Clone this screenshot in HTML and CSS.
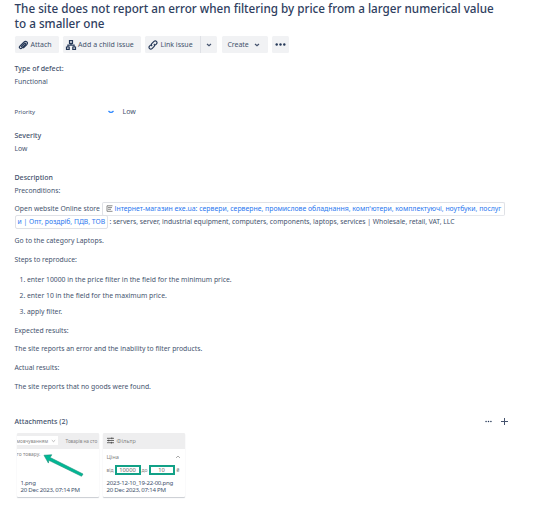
FILE: index.html
```
<!DOCTYPE html>
<html lang="en">
<head>
<meta charset="utf-8">
<title>Issue</title>
<link rel="stylesheet" href="styles.css">
</head>
<body>
<main class="issue">
  <h1 class="title">The site does not report an error when filtering by price from a larger numerical value<br>to a smaller one</h1>
  <div class="toolbar">
    <button class="btn attach"><svg class="icon" viewBox="0 0 12 12"><path d="M4 7.900 7.500 4.400c.8-.8 1.700.2 1 1L4.900 9c-1.500 1.500-3.400-.4-2-1.900l4-4c2.200-2.200 4.800.5 2.700 2.700L6.200 9.200"/></svg><span>Attach</span></button>
    <button class="btn child"><svg class="icon" viewBox="0 0 12 12"><path d="M4.500 1.700h3v2.600h-3zM1.500 8h2.700v2.300H1.500zM7.800 8h2.700v2.300H7.800zM6 4.300v1.900M2.900 8V6.200h6.200V8"/></svg><span>Add a child issue</span></button>
    <div class="split">
      <button class="btn link"><svg class="icon" viewBox="0 0 12 12"><path d="M5.200 7.100C4 6 4.200 5.200 5 4.400L7 2.400c1.600-1.600 4.100.8 2.500 2.400L8.200 6.200M6.800 4.900C8 6 7.800 6.800 7 7.600L5 9.600C3.400 11.200.9 8.800 2.500 7.200L3.800 5.800"/></svg><span>Link issue</span></button>
      <button class="btn drop"><svg class="chev" viewBox="0 0 6 4"><path d="M1 1l2 1.800L5 1"/></svg></button>
    </div>
    <button class="btn create"><span>Create</span><svg class="chev" viewBox="0 0 6 4"><path d="M1 1l2 1.800L5 1"/></svg></button>
    <button class="btn more"><svg class="dots" viewBox="0 0 11 3"><circle cx="1.700" cy="1.500" r="1.200"/><circle cx="5.500" cy="1.500" r="1.200"/><circle cx="9.300" cy="1.500" r="1.200"/></svg></button>
  </div>
  <section class="field defect"><h2>Type of defect:</h2><p>Functional</p></section>
  <section class="priority"><span class="name">Priority</span><svg class="chev" viewBox="0 0 6 4"><path d="M.5 1Q3 3.800 5.500 1"/></svg><span>Low</span></section>
  <section class="field severity"><h2>Severity</h2><p>Low</p></section>
  <section class="description">
    <h2>Description</h2>
    <p class="pre">Preconditions:</p>
    <div class="site">
      <div class="line"><span class="open">Open website Online store</span><a class="card first"><svg class="page" viewBox="0 0 7 7"><path d="M6.500.8H1v5.500h5.500M2 2.600h4M2 4.300h3"/></svg><span>Інтернет-магазин exe.ua: сервери, серверне, промислове обладнання, комп'ютери, комплектуючі, ноутбуки, послуг</span></a></div>
      <div class="line"><a class="card second"><span>и | Опт, роздріб, ПДВ, ТОВ</span></a><span class="rest">: servers, server, industrial equipment, computers, components, laptops, services | Wholesale, retail, VAT, LLC</span></div>
    </div>
    <p class="goto">Go to the category Laptops.</p>
    <p class="steps-title">Steps to reproduce:</p>
    <ol class="steps">
      <li><span>1.</span>enter 10000 in the price filter in the field for the minimum price.</li>
      <li><span>2.</span>enter 10 in the field for the maximum price.</li>
      <li><span>3.</span>apply filter.</li>
    </ol>
    <div class="results">
      <p>Expected results:</p>
      <p>The site reports an error and the inability to filter products.</p>
      <p>Actual results:</p>
      <p>The site reports that no goods were found.</p>
    </div>
  </section>
  <section class="attachments">
    <header><h2>Attachments (2)</h2><div class="actions"><svg class="dots" viewBox="0 0 11 3"><circle cx="1.700" cy="1.500" r="1.200"/><circle cx="5.500" cy="1.500" r="1.200"/><circle cx="9.300" cy="1.500" r="1.200"/></svg><svg class="plus" viewBox="0 0 7 7"><path d="M3.500 0v7M0 3.500h7"/></svg></div></header>
    <div class="files">
      <article class="file one">
        <div class="shot">
          <div class="bar"><span class="select">мовчуванням<svg class="chev" viewBox="0 0 6 4"><path d="M1 1l2 1.800L5 1"/></svg></span><span class="count">Товарів на сто</span></div>
          <div class="goods">го товару.</div>
          <svg class="arrow" viewBox="0 0 42 24"><path d="M1 1 9 .5 7.300 3.300 41 20.200 39.500 22.500 6 6.200 5.500 9z"/></svg>
        </div>
        <div class="meta">1.png<br>20 Dec 2023, 07:14 PM</div>
      </article>
      <article class="file two">
        <div class="shot">
          <div class="bar"><svg class="sliders" viewBox="0 0 8 8"><path d="M0 1.500h8M0 4h8M0 6.500h8M5.500.5v2M2 3v2M5 5.500v2"/></svg><span>Фільтр</span></div>
          <div class="price"><span>Ціна</span><svg class="chev" viewBox="0 0 6 4"><path d="M1 3l2-2 2 2"/></svg></div>
          <div class="range"><span class="from">від</span><span class="box">10000</span><span class="to">до</span><span class="box">10</span><span class="cur">₴</span></div>
        </div>
        <div class="meta"><span class="fname">2023-12-10_19-22-00.png</span><br>20 Dec 2023, 07:14 PM</div>
      </article>
    </div>
  </section>
</main>
</body>
</html>
```
FILE: styles.css
```
* { box-sizing: border-box; }
body { margin: 0; background: #fff; color: #44526d; font: 7px/10px "Noto Sans", "Open Sans", sans-serif; }
h1, h2, p, ol { margin: 0; padding: 0; }
h2 { font-size: 7px; line-height: 10px; font-weight: 500; color: #42506b; }
svg { display: block; flex: none; fill: none; stroke: currentColor; }
span, p { white-space: nowrap; }
.issue { width: 539px; height: 508px; padding: 1px 0 0 14.5px; overflow: hidden; }
.title { font-size: 11.7px; line-height: 15px; font-weight: 500; color: #2f4060; white-space: nowrap; }
.toolbar { display: flex; height: 17px; margin-top: 5px; }
.btn { display: flex; align-items: center; height: 17px; border: 0; padding: 0; border-radius: 1.5px; background: #f1f2f4; color: #44526d; font: inherit; }
.icon { width: 12px; height: 12px; margin: 0 1px 0 2px; stroke-width: 1.2; color: #253858; }
.chev { width: 6px; height: 4px; stroke-width: 1.2; }
.dots { width: 11px; height: 3px; fill: currentColor; stroke: none; color: #253858; }
.attach { width: 44px; margin-right: 4.5px; }
.attach .icon { margin-right: 2px; }
.child { width: 77.5px; margin-right: 4.5px; letter-spacing: .06px; }
.split { display: flex; width: 72px; margin-right: 5px; }
.link { width: 55px; border-radius: 1.5px 0 0 1.5px; }
.link .icon { margin-right: 1.5px; }
.drop { flex: 1; justify-content: center; border-left: 1px solid #dfe1e6; border-radius: 0 1.5px 1.5px 0; }
.create { width: 46px; padding-left: 5.5px; gap: 5px; margin-right: 4px; }
.create span { letter-spacing: -.05px; }
.more { width: 17px; justify-content: center; }
.defect { margin-top: 10.5px; }
.field p { margin-top: 3px; font-size: 6.8px; }
.priority { display: flex; align-items: center; height: 10px; margin-top: 20.5px; }
.priority .name { width: 93.5px; font-size: 6px; }
.priority .chev { color: #2684ff; margin-right: 8.5px; }
.severity { margin-top: 14px; }
.description { margin-top: 19px; font-size: 6.8px; }
.pre { margin-top: 3px; }
.site { margin-top: 6px; }
.line { display: flex; align-items: center; height: 13px; }
.open { width: 87.5px; letter-spacing: .02px; }
.card { display: flex; align-items: center; height: 14px; border: 1px solid #dfe1e6; border-radius: 2px; color: #2a78f0; font-size: 6.88px; }
.first { width: 402.5px; padding-left: 3px; border-bottom-color: #e6e8ec; }
.page { width: 7px; height: 7px; margin-right: 1.5px; color: #6b6b6b; stroke-width: .8; }
.second { width: 93px; padding-left: 2px; font-size: 6.8px; }
.rest { margin-left: 2px; font-size: 6.76px; }
.goto { margin-top: 8px; letter-spacing: .03px; }
.steps-title { margin-top: 9px; }
.steps { list-style: none; margin-top: 10px; }
.steps li { display: flex; height: 10px; margin-bottom: 6px; padding-left: 5px; white-space: nowrap; letter-spacing: .015px; }
.steps li span { width: 7.5px; }
.results { display: grid; row-gap: 8.8px; margin-top: 8.5px; }
.attachments { margin-top: 25px; }
.attachments header { display: flex; justify-content: space-between; align-items: center; height: 10px; padding-right: 31px; }
.actions { display: flex; align-items: center; gap: 9px; }
.actions .dots { width: 7px; }
.plus { width: 7px; height: 7px; stroke-width: 1; }
.files { display: flex; gap: 4px; margin: 6px 0 0 2px; }
.file { width: 82px; height: 64px; overflow: hidden; border-radius: 1px; box-shadow: 0 1px 1px #c9ccd2; }
.shot { position: relative; height: 46px; color: #888; font-size: 5px; }
.bar { display: flex; align-items: center; height: 16px; background: #eeeeef; }
.meta { padding-left: 4px; font-size: 6.1px; line-height: 7.5px; letter-spacing: -.25px; white-space: nowrap; }
.select { display: flex; align-items: center; gap: 3px; width: 41px; height: 9px; background: #fff; font-size: 4.7px; }
.select .chev { width: 5px; stroke-width: .7; }
.count { margin-left: 8px; font-size: 4.8px; letter-spacing: -.1px; }
.goods { height: 10px; }
.arrow { position: absolute; left: 26px; top: 21px; width: 41px; height: 24px; fill: #00b894; stroke: #168b78; stroke-width: .6; }
.two .bar { gap: 3px; padding-left: 4px; font-size: 6px; }
.sliders { width: 7px; height: 7px; stroke-width: .9; color: #444; }
.price { display: flex; align-items: center; justify-content: space-between; height: 17px; padding: 0 4px; font-size: 5.8px; }
.price .chev { stroke-width: .7; }
.range { display: flex; align-items: center; height: 10px; margin-top: -1px; padding-left: 4px; }
.from { width: 8px; }
.box { display: flex; align-items: center; justify-content: center; width: 26px; height: 10px; border: 2px solid #12a187; font-size: 5.8px; color: #666; }
.to { width: 8px; padding-left: 1px; }
.cur { padding-left: 2px; }
```
